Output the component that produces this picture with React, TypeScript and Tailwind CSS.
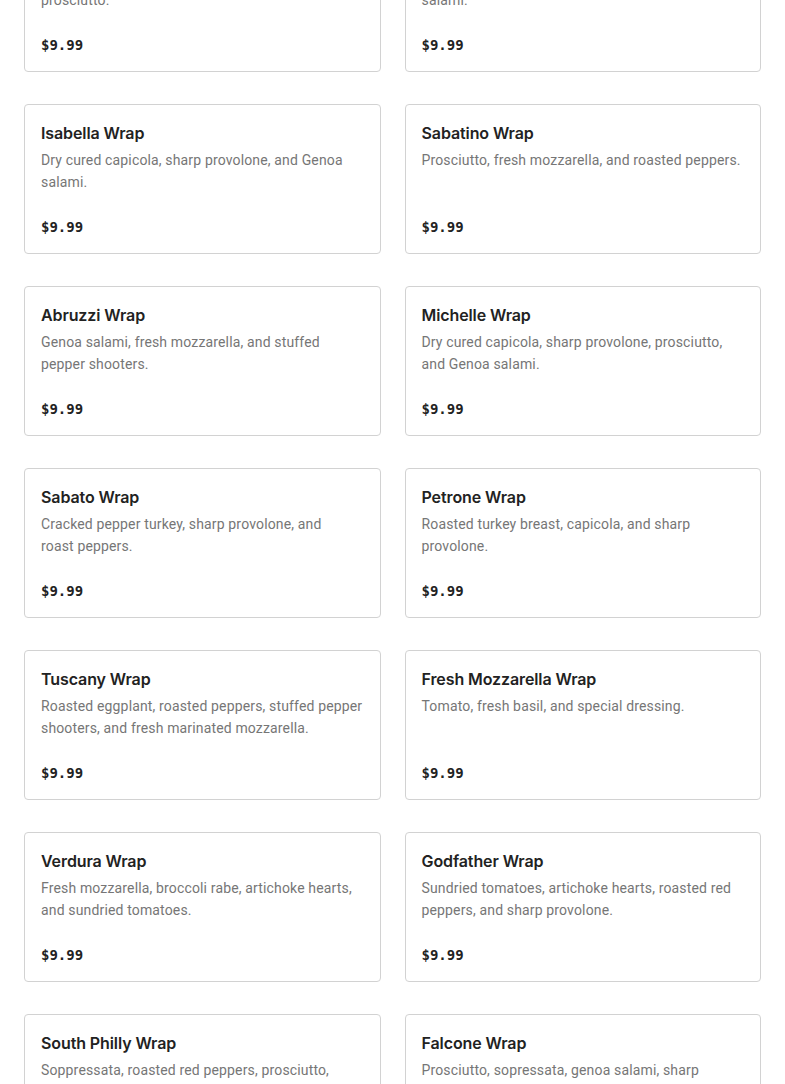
import React from "react";

type Wrap = { name: string; desc: string };

// \u00a0 keeps a couple of word pairs together so lines break as on the menu
const wraps: Wrap[] = [
  { name: "Italian Wrap", desc: "Genoa salami, capicola, sharp provolone, and prosciutto." },
  { name: "Roma Wrap", desc: "Fresh mozzarella, roasted peppers, and Genoa salami." },
  { name: "Isabella Wrap", desc: "Dry cured capicola, sharp provolone, and Genoa salami." },
  { name: "Sabatino Wrap", desc: "Prosciutto, fresh mozzarella, and roasted peppers." },
  { name: "Abruzzi Wrap", desc: "Genoa salami, fresh mozzarella, and stuffed pepper shooters." },
  { name: "Michelle Wrap", desc: "Dry cured capicola, sharp provolone, prosciutto, and Genoa salami." },
  { name: "Sabato Wrap", desc: "Cracked pepper turkey, sharp provolone, and roast\u00a0peppers." },
  { name: "Petrone Wrap", desc: "Roasted turkey breast, capicola, and sharp provolone." },
  { name: "Tuscany Wrap", desc: "Roasted eggplant, roasted peppers, stuffed pepper shooters, and fresh marinated mozzarella." },
  { name: "Fresh Mozzarella Wrap", desc: "Tomato, fresh basil, and special dressing." },
  { name: "Verdura Wrap", desc: "Fresh mozzarella, broccoli rabe, artichoke hearts, and sundried tomatoes." },
  { name: "Godfather Wrap", desc: "Sundried tomatoes, artichoke hearts, roasted red peppers, and sharp provolone." },
  { name: "South Philly Wrap", desc: "Soppressata, roasted red peppers, prosciutto, and\u00a0sharp provolone." },
  { name: "Falcone Wrap", desc: "Prosciutto, sopressata, genoa salami, sharp provolone, and roasted peppers." },
];

const WrapCard = ({ item }: { item: Wrap }) => (
  <div className="flex flex-col border border-[#d2d2d2] rounded-[4px] bg-white p-4">
    <h3 className="text-[16px] leading-6 font-semibold text-[#222222] font-['Inter',sans-serif] tracking-[-0.1px]">
      {item.name}
    </h3>
    <p className="mt-1 text-[14px] leading-[22px] text-[#767676] font-['Roboto',sans-serif] tracking-[0.15px]">
      {item.desc}
    </p>
    <p className="mt-auto pt-6 pb-px -mb-px text-[14px] leading-5 font-bold text-[#222222] font-['DejaVu_Sans_Mono',monospace]">
      $9.99
    </p>
  </div>
);

export default function App() {
  return (
    <div className="h-screen overflow-hidden bg-white">
      <div className="-mt-[78px] px-6 grid grid-cols-2 gap-x-6 gap-y-8">
        {wraps.map((w) => (
          <WrapCard key={w.name} item={w} />
        ))}
      </div>
    </div>
  );
}
